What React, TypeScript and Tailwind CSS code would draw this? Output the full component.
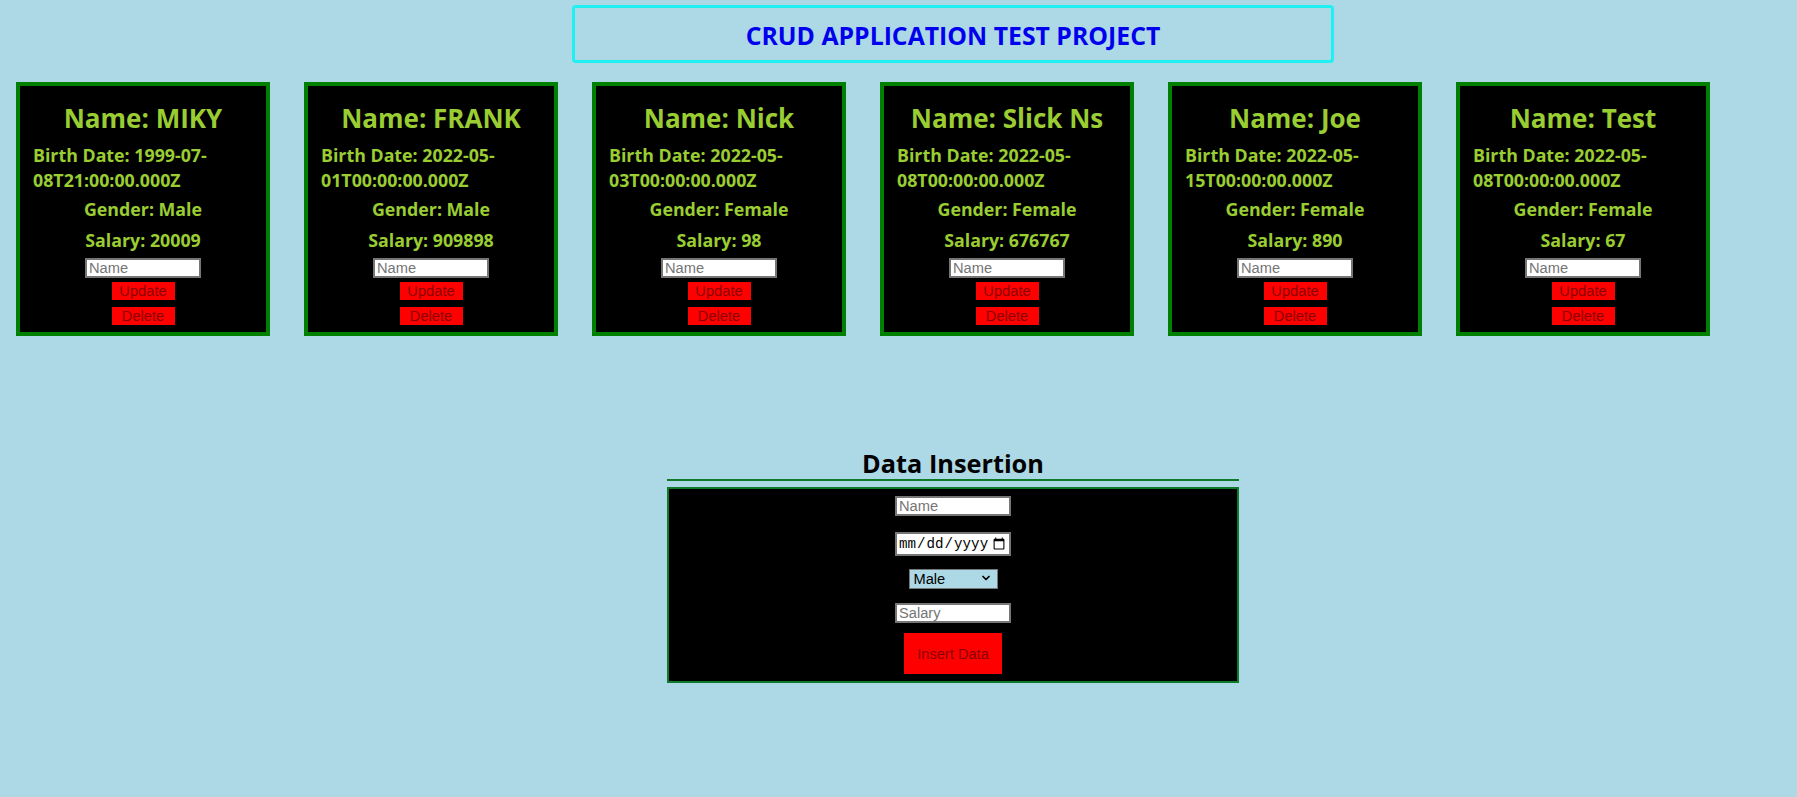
import { ChevronDown } from 'lucide-react';

interface Employee {
  name: string;
  birthDate: string;
  gender: string;
  salary: number;
}

const employees: Employee[] = [
  { name: 'MIKY', birthDate: '1999-07-08T21:00:00.000Z', gender: 'Male', salary: 20009 },
  { name: 'FRANK', birthDate: '2022-05-01T00:00:00.000Z', gender: 'Male', salary: 909898 },
  { name: 'Nick', birthDate: '2022-05-03T00:00:00.000Z', gender: 'Female', salary: 98 },
  { name: 'Slick Ns', birthDate: '2022-05-08T00:00:00.000Z', gender: 'Female', salary: 676767 },
  { name: 'Joe', birthDate: '2022-05-15T00:00:00.000Z', gender: 'Female', salary: 890 },
  { name: 'Test', birthDate: '2022-05-08T00:00:00.000Z', gender: 'Female', salary: 67 },
];

function EmployeeCard({ employee }: { employee: Employee }) {
  return (
    <div className="w-[254px] h-[254px] shrink-0 border-4 border-[#008000] bg-black flex flex-col items-center px-[13px] text-[#9acd32] font-bold">
      <h2 className="mt-[14px] text-[26px] leading-[36px]">Name: {employee.name}</h2>
      <p className="mt-[7px] text-[17.8px] leading-[25px]">Birth Date: {employee.birthDate}</p>
      <p className="mt-[4px] text-[17.8px] leading-[25px]">Gender: {employee.gender}</p>
      <p className="mt-[6px] text-[17.8px] leading-[25px]">Salary: {employee.salary}</p>
      {/* native-looking controls */}
      <input
        type="text"
        placeholder="Name"
        className="mt-[5px] w-[116px] h-[20px] px-[2px] bg-white border-2 border-[#767676] text-black font-normal text-[14.67px] leading-none font-['Liberation_Sans',Arial,sans-serif] placeholder:text-[#757575] outline-none"
      />
      <button className="mt-[4px] w-[63px] h-[18px] bg-[#ff0000] text-[#8b0000] font-normal text-[14.67px] leading-[18px] font-['Liberation_Sans',Arial,sans-serif]">
        Update
      </button>
      <button className="mt-[7px] w-[63px] h-[18px] bg-[#ff0000] text-[#8b0000] font-normal text-[14.67px] leading-[18px] font-['Liberation_Sans',Arial,sans-serif]">
        Delete
      </button>
    </div>
  );
}

export default function App() {
  return (
    <div className="w-full min-h-screen h-[797px] overflow-hidden bg-[#add8e6] font-['Open_Sans',sans-serif]">
      <div className="w-[1906px]">
        {/* Title */}
        <header className="mx-auto mt-[5px] w-[762px] h-[58px] border-[3px] border-[#1ff0f0] rounded-[4px] flex items-center justify-center">
          <h1 className="text-[24.8px] font-bold text-[#0000ee] pt-[3px]">CRUD APPLICATION TEST PROJECT</h1>
        </header>

        {/* Employee list */}
        <div className="flex gap-[34px] pl-4 mt-[19px]">
          {employees.map((e) => (
            <EmployeeCard key={e.name} employee={e} />
          ))}
        </div>

        {/* Insertion form */}
        <section className="mx-auto w-[572px] mt-[111px]">
          <h2 className="h-[34px] text-center text-[25.3px] leading-[32px] font-bold text-black border-b-2 border-[#0e7a2a]">
            Data Insertion
          </h2>
          <div className="mt-[6px] h-[196px] border-2 border-[#0e7a2a] bg-black flex flex-col items-center font-['Liberation_Sans',Arial,sans-serif] text-[14.67px]">
            <input
              type="text"
              placeholder="Name"
              className="mt-[7px] w-[116px] h-[20px] px-[2px] bg-white border-2 border-[#767676] text-black leading-none placeholder:text-[#757575] outline-none"
            />
            <input
              type="date"
              className="mt-[16px] w-[116px] h-[24px] px-[1px] bg-white border-2 border-[#767676] text-black font-['Liberation_Mono',monospace] text-[14.2px] leading-none outline-none [color-scheme:light]"
            />
            <div className="relative mt-[12px] w-[89px] h-[20px]">
              <select className="appearance-none w-full h-full pl-[4px] bg-[#add8e6] border border-[#767676] text-black text-[14.67px] leading-none outline-none">
                <option>Male</option>
                <option>Female</option>
              </select>
              <ChevronDown className="absolute right-[6px] top-[4px] w-[12px] h-[12px] pointer-events-none text-black" strokeWidth={3.5} />
            </div>
            <input
              type="text"
              placeholder="Salary"
              className="mt-[15px] w-[116px] h-[20px] px-[2px] bg-white border-2 border-[#767676] text-black leading-none placeholder:text-[#757575] outline-none"
            />
            <button className="mt-[10px] w-[98px] h-[41px] bg-[#ff0000] text-[#8b0000]">Insert Data</button>
          </div>
        </section>
      </div>
    </div>
  );
}
